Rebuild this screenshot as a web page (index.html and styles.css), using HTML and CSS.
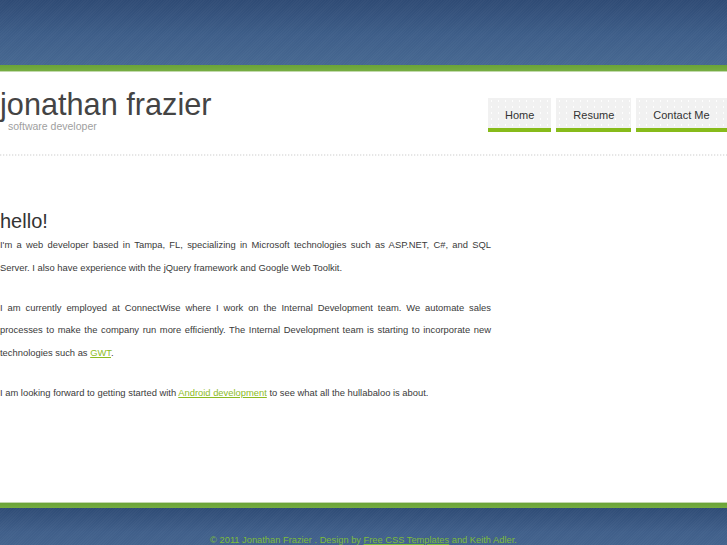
FILE: index.html
```html
<!DOCTYPE html>
<html lang="en">
<head>
<meta charset="utf-8">
<title>jonathan frazier</title>
<link rel="stylesheet" href="styles.css">
</head>
<body>
<div class="topbar"></div>
<div class="topline"></div>
<div class="header">
  <div class="logo">
    <h1 class="logo-title">jonathan frazier</h1>
    <p class="logo-sub">software developer</p>
  </div>
  <ul class="nav">
    <li class="nav-item"><a class="nav-link" href="#">Home</a></li>
    <li class="nav-item"><a class="nav-link" href="#">Resume</a></li>
    <li class="nav-item"><a class="nav-link" href="#">Contact Me</a></li>
  </ul>
</div>
<div class="dots"></div>
<div class="content">
  <h2 class="content-title">hello!</h2>
  <p class="text">I'm a web developer based in Tampa, FL, specializing in Microsoft technologies such as ASP.NET, C#, and SQL Server. I also have experience with the jQuery framework and Google Web Toolkit.</p>
  <p class="text">I am currently employed at ConnectWise where I work on the Internal Development team. We automate sales processes to make the company run more efficiently. The Internal Development team is starting to incorporate new technologies such as <a class="link" href="#">GWT</a>.</p>
  <p class="text">I am looking forward to getting started with <a class="link" href="#">Android development</a> to see what all the hullabaloo is about.</p>
</div>
<div class="footline"></div>
<div class="footer">
  <p class="footer-text">&copy; 2011 Jonathan Frazier . Design by <a class="footer-link" href="#">Free CSS Templates</a> and Keith Adler.</p>
</div>
</body>
</html>
```
FILE: styles.css
```css
html, body {
  margin: 0;
  padding: 0;
  background: #fff;
  overflow-x: hidden;
}
body {
  font-family: "Liberation Sans", Arial, sans-serif;
  color: #444;
}
.topbar {
  height: 65px;
  background:
    repeating-linear-gradient(135deg, rgba(255,255,255,0.025) 0 1px, transparent 1px 2px),
    linear-gradient(#2f4b75, #3e5e89 55%, #476891);
}
.topline {
  height: 6px;
  background: linear-gradient(#6aa337, #76ad42);
  border-bottom: 1px solid #c2d9ad;
}
.header {
  display: flex;
  align-items: flex-start;
  height: 82px;
}
.logo {
  width: 488px;
  flex: none;
  padding-top: 17px;
}
.logo-title {
  margin: 0;
  font-size: 30.7px;
  line-height: 31px;
  font-weight: normal;
  color: #444;
}
.logo-sub {
  margin: 0 0 0 8px;
  font-size: 10.5px;
  line-height: 12px;
  color: #a0a0a0;
}
.nav {
  display: flex;
  gap: 5px;
  list-style: none;
  margin: 26px 0 0 0;
  padding: 0;
  flex: none;
}
.nav-item {
  display: block;
}
.nav-link {
  display: block;
  height: 30px;
  line-height: 35px;
  padding: 0 17px;
  background:
    radial-gradient(circle, rgba(255,255,255,0.9) 0 0.6px, transparent 0.8px) 0 0 / 7px 6px,
    #f1f1f1;
  border-bottom: 4px solid #87bb1a;
  color: #333;
  font-size: 11px;
  text-decoration: none;
}
.dots {
  height: 2px;
  background: repeating-linear-gradient(90deg, #e6e6e6 0 1px, #f8f8f8 1px 2px, transparent 2px 3px);
}
.content {
  width: 491px;
  padding-top: 53px;
  height: 293px;
}
.content-title {
  margin: 0;
  font-size: 20px;
  line-height: 25px;
  font-weight: normal;
  color: #333;
}
.text {
  margin: 0 0 17.5px 0;
  font-size: 9.4px;
  line-height: 22.5px;
  text-align: justify;
  color: #3a3a3a;
}
.link {
  color: #8cbb1f;
  text-decoration: underline;
}
.footline {
  height: 5px;
  border-top: 1px solid #c3d8af;
  background: linear-gradient(#6aa337, #76ad42);
}
.footer {
  height: 60px;
  padding-top: 26px;
  background:
    repeating-linear-gradient(135deg, rgba(255,255,255,0.025) 0 1px, transparent 1px 2px),
    linear-gradient(#2f4c76, #405f8a 40%, #4a6a93);
  box-sizing: border-box;
}
.footer-text {
  margin: 0;
  text-align: center;
  font-size: 9.3px;
  line-height: 12px;
  color: #7cbd3a;
}
.footer-link {
  color: #7cbd3a;
  text-decoration: underline;
}
```
